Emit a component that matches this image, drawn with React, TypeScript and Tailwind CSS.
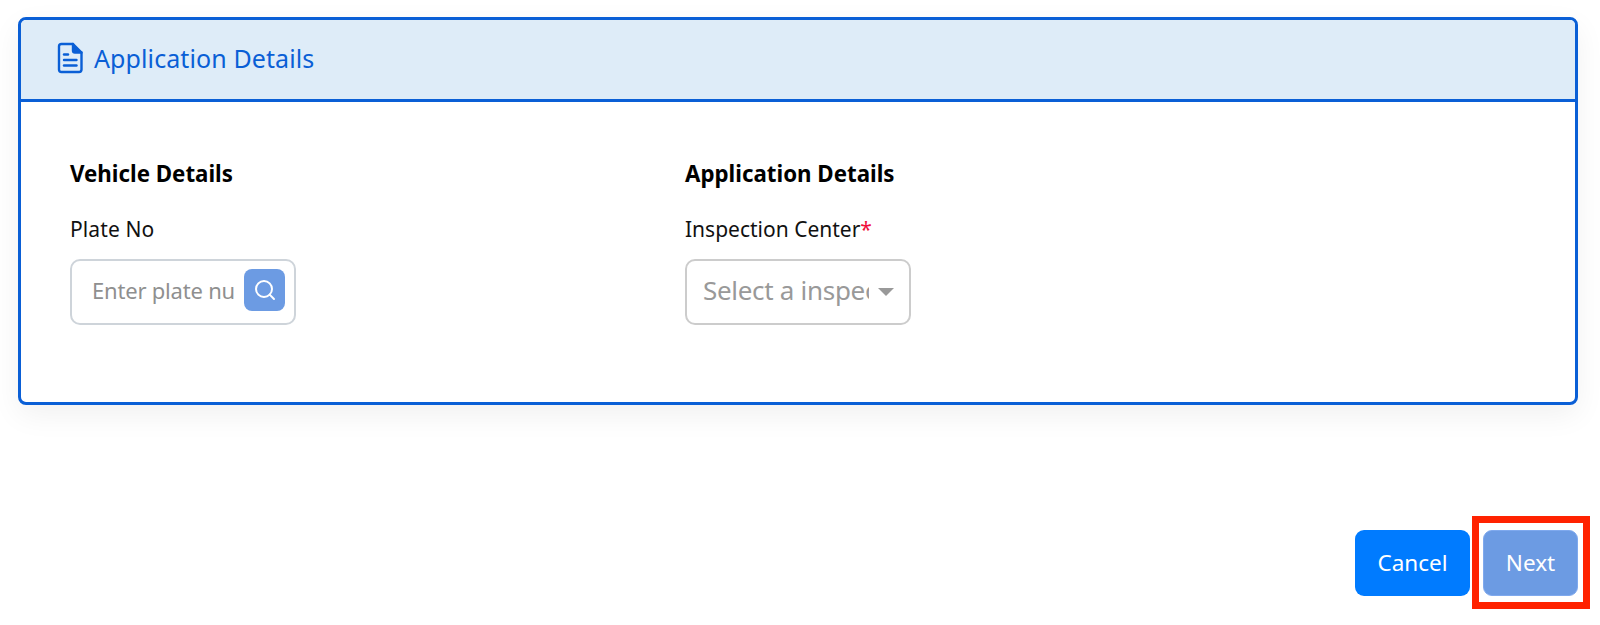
import { Search } from "lucide-react";

const FileIcon = () => (
  <svg className="-mt-[2px]" width="26" height="32" viewBox="0 0 26 32" fill="none" stroke="#0a5fd6" strokeWidth="2.4" strokeLinejoin="round" strokeLinecap="round">
    <path d="M4.5 2H16L24.5 10.5V27.5C24.5 29 23.3 30 22 30H4.5C3 30 2 29 2 27.5V4.5C2 3 3 2 4.5 2Z" />
    <path d="M16 2V8.5C16 9.8 16.8 10.5 18 10.5H24.5" fill="#0a5fd6" />
    <path d="M7 12.5H11" />
    <path d="M7 18H19.5" />
    <path d="M7 23.5H19.5" />
  </svg>
);

export default function App() {
  return (
    <div className="relative h-[625px] w-[1600px] overflow-hidden bg-white font-['Noto_Sans','Lato',sans-serif]">
      <div className="ml-[18px] mr-[22px] pt-[17px]">
        {/* card */}
        <div className="h-[388px] overflow-hidden rounded-lg border-[3px] border-[#0a5fd6] bg-white shadow-[0_10px_30px_rgba(0,0,0,0.06)]">
          <div className="flex h-[82px] items-center gap-[11px] border-b-[3px] border-[#0a5fd6] bg-[#deecf8] pl-[36px] pb-[1px]">
            <FileIcon />
            <span className="text-[25px] tracking-[0.1px] text-[#0a5fd6]">Application Details</span>
          </div>
          <div className="grid grid-cols-[615px_1fr] pl-[49px] pt-[56px]">
            <div>
              <h3 className="text-[22.3px] leading-[32px] font-bold text-black">Vehicle Details</h3>
              <label className="mt-[23px] block text-[21px] leading-[32px] tracking-[0.1px] text-[#111]">Plate No</label>
              <div className="mt-[14px] flex h-[66px] w-[226px] items-center rounded-[10px] border-2 border-[#ced4da] pb-[4px] pl-[20px] pr-[9px]">
                <input
                  readOnly
                  placeholder="Enter plate number"
                  className="w-[143px] bg-transparent text-[22px] tracking-[-0.2px] outline-none placeholder:text-[#8f8f8f]"
                />
                <button className="ml-auto flex h-[42px] w-[41px] shrink-0 items-center justify-center rounded-[8px] bg-[#6c9be3]">
                  <Search size={24} strokeWidth={2} className="text-white" />
                </button>
              </div>
            </div>
            <div>
              <h3 className="text-[22.3px] leading-[32px] font-bold text-black">Application Details</h3>
              <label className="mt-[23px] block text-[21px] leading-[32px] text-[#111]">
                Inspection Center<span className="text-[#f0103c]">*</span>
              </label>
              <div className="mt-[14px] flex h-[66px] w-[226px] items-center rounded-[10px] border-2 border-[#cccccc] pb-[4px] pl-[16px]">
                <input
                  readOnly
                  placeholder="Select a inspection center"
                  className="w-[166px] bg-transparent text-[26px] tracking-[-0.3px] outline-none placeholder:text-[#999999]"
                />
                <span className="ml-[9px] mt-[4px] h-0 w-0 border-x-[8px] border-t-[8px] border-x-transparent border-t-[#999999]" />
              </div>
            </div>
          </div>
        </div>

        {/* actions */}
        <div className="mt-[125px] flex justify-end gap-[13px]">
          <button className="h-[66px] w-[115px] rounded-[9px] bg-[#007bff] text-[22.5px] text-white">Cancel</button>
          <button className="h-[66px] w-[95px] rounded-[9px] border border-[#7fa9ee] bg-[#6c9be3] text-[22.5px] text-white">Next</button>
        </div>
      </div>

      {/* red annotation */}
      <div className="absolute left-[1472px] top-[516px] h-[93px] w-[118px] border-[7px] border-[#ff2200]" />
    </div>
  );
}
